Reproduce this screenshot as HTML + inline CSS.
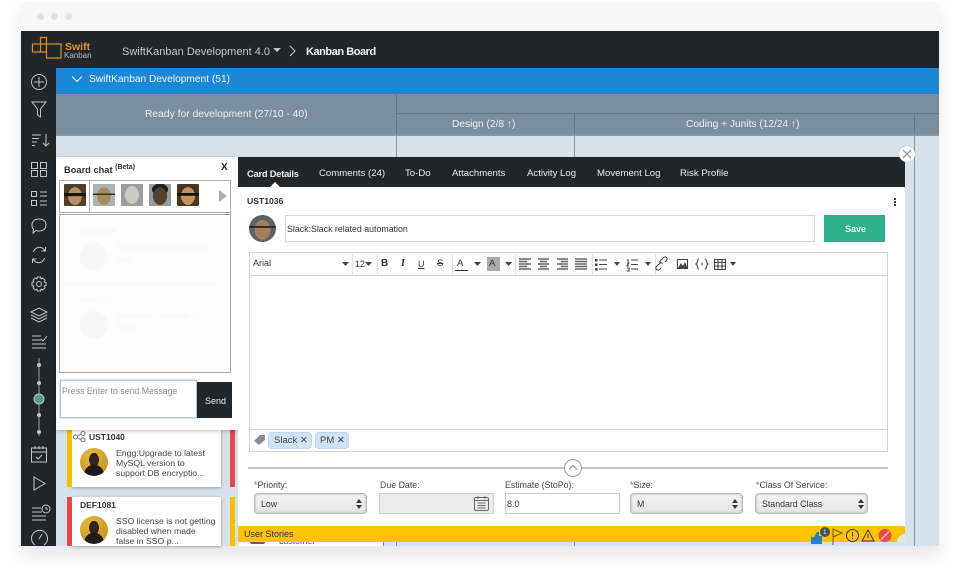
<!DOCTYPE html>
<html><head><meta charset="utf-8">
<style>
html,body{margin:0;padding:0;background:#fff;}
#p{position:relative;width:960px;height:574px;overflow:hidden;background:#fff;font-family:"Liberation Sans",sans-serif;color:#333;filter:blur(.3px);}
#p div,#p svg{position:absolute;}
.t{white-space:nowrap;font-size:10px;line-height:12px;}
.lab{font-size:8.8px;color:#444;white-space:nowrap;line-height:11px;}
.sel{background:linear-gradient(#f5f5f5,#e4e4e4);border:1px solid #bbb;border-radius:4px;box-shadow:inset 0 0 2px #aaa;box-sizing:border-box;height:21px;top:493px;font-size:8.8px;line-height:20px;padding-left:6px;color:#333;}
.i{fill:none;stroke:#bfc4c8;stroke-width:1;}
.tb{font-size:10px;line-height:12px;color:#333;white-space:nowrap;}
.sep{background:#e2e2e2;width:1px;top:254px;height:21px;}
.tab{color:#e9ecee;font-size:9.6px;line-height:12px;white-space:nowrap;top:168px;}
.av{border-radius:1px;width:22px;height:22px;top:184px;}
.gold{background:radial-gradient(ellipse 10px 10px at 50% 95%,#1d1a18 98%,transparent),radial-gradient(ellipse 5px 7px at 50% 42%,#32241a 98%,transparent),radial-gradient(circle at 40% 30%,#e8bb3c,#b98a20);}
</style></head><body><div id="p">

<!-- window shadow -->
<div style="left:21px;top:2px;width:918px;height:544px;box-shadow:0 9px 16px rgba(0,0,0,.1);border-radius:4px 4px 0 0;"></div>
<!-- chrome -->
<div style="left:21px;top:2px;width:918px;height:29px;background:#f8f8f8;border-radius:4px 4px 0 0;"></div>
<div style="left:37px;top:13px;width:7px;height:7px;border-radius:50%;background:#e3e3e3;"></div>
<div style="left:51px;top:13px;width:7px;height:7px;border-radius:50%;background:#e3e3e3;"></div>
<div style="left:65px;top:13px;width:7px;height:7px;border-radius:50%;background:#e3e3e3;"></div>

<!-- header -->
<div style="left:21px;top:31px;width:918px;height:37px;background:#20262c;"></div>
<svg style="left:30px;top:35px;" width="34" height="26" fill="none" stroke="#e08a1e" stroke-width="1.2"><path d="M2.500 9h8v8h-8zM10.500 9V2.500h6V9h-6M16.500 9H31v14H16.500V9M10.500 17h6"/></svg>
<div class="t" style="left:65px;top:41px;font-size:10.500px;font-weight:bold;color:#e8941f;">Swift</div>
<div class="t" style="left:64px;top:50px;font-size:8px;color:#b8bcbf;">Kanban</div>
<div class="t" style="left:122px;top:46px;font-size:11px;line-height:13px;color:#c3c8cc;">SwiftKanban Development 4.0</div>
<div style="left:273px;top:48px;width:0;height:0;border-left:4px solid transparent;border-right:4px solid transparent;border-top:4px solid #c3c8cc;"></div>
<svg style="left:288px;top:45px;" width="10" height="12" fill="none" stroke="#c3c8cc"><path d="M2 1l5 5-5 5"/></svg>
<div class="t" style="left:306px;top:46px;font-size:11px;line-height:13px;font-weight:bold;letter-spacing:-.45px;color:#f2f4f5;">Kanban Board</div>

<!-- sidebar -->
<div style="left:21px;top:68px;width:35px;height:478px;background:#20262c;"></div>
<svg style="left:21px;top:68px;" width="35" height="478" class="i">
<g class="i">
<circle cx="18" cy="14" r="7.5"/><path d="M18 9v10M13 14h10"/>
<path d="M11 34h14l-5.500 7v8l-3-2v-6z"/>
<path d="M11 67h9M11 70.500h7M11 74h5M11 77.500h3M25 66v12M22 75l3 3 3-3"/>
<path d="M10.500 94.500h6v6h-6zM19.500 94.500h6v6h-6zM10.500 102.500h6v6h-6zM19.500 102.500h6v6h-6z"/>
<path d="M10.500 123.500h5v5h-5zM10.500 132.500h5v5h-5zM19 124h7M19 128h7M19 133h7M19 137h7"/>
<path d="M11 157c0-4 3-6 7-6s7 2 7 6-3 6-7 6c-1 0-2 0-3-.5l-3 2.500 .5-3.500c-1-1-1.500-3-1.500-4.500z"/>
<path d="M12.500 184a6 6 0 0 1 10-3l2 2M23.500 190a6 6 0 0 1-10 3l-2-2M24.500 179v4h-4M11.500 195v-4h4"/>
<circle cx="18" cy="216" r="2.500"/><path d="M16.500 209h3l.5 1.800 1.800-.8 2.200 2.200-.8 1.800 1.800.5v3l-1.800.5.8 1.800-2.200 2.200-1.800-.8-.5 1.800h-3l-.5-1.800-1.800.8-2.200-2.200.8-1.800-1.800-.5v-3l1.800-.5-.8-1.800 2.200-2.200 1.800.8z"/>
<path d="M10 244l8-4 8 4-8 4zM10 247l8 4 8-4M10 250l8 4 8-4"/>
<path d="M11 268h9M11 272h9M11 276h14M11 280h14M20 271l2 2 4-5"/>
<path d="M18 290v78" stroke="#9aa0a5"/>
<path d="M10.500 380h15v14h-15zM10.500 384h15M14 378v3M18 378v3M22 378v3M15 389l2 2 4-4"/>
<path d="M13 409l11 6.500-11 6.500z"/>
<path d="M11 440h9M11 444h10M11 448h14M11 452h14"/><circle cx="25" cy="441" r="4"/><path d="M25 439v2h2"/>
<path d="M14 477a8 8 0 1 1 9 0M18 471l3-5"/>
</g>
<circle cx="18" cy="297" r="2" fill="#bfc4c8" stroke="none"/>
<circle cx="18" cy="315" r="2" fill="#bfc4c8" stroke="none"/>
<circle cx="18" cy="331" r="5" fill="#4f9d94" stroke="#bfc4c8"/>
<circle cx="18" cy="347" r="2" fill="#bfc4c8" stroke="none"/>
<circle cx="18" cy="364" r="2" fill="#bfc4c8" stroke="none"/>
</svg>

<!-- blue band -->
<div style="left:56px;top:68px;width:883px;height:26px;background:#1b87d5;"></div>
<svg style="left:71px;top:74px;" width="12" height="10" fill="none" stroke="#e8f2fa"><path d="M1 2.500l5 5 5-5"/></svg>
<div class="t" style="left:89px;top:74px;font-size:10.200px;color:#f0f6fb;">SwiftKanban Development (51)</div>

<!-- column headers -->
<div style="left:56px;top:94px;width:883px;height:41px;background:#7a8e9f;"></div>
<div style="left:396px;top:113px;width:543px;height:1px;background:#64778a;"></div>
<div style="left:396px;top:94px;width:1px;height:41px;background:#64778a;"></div>
<div style="left:574px;top:114px;width:1px;height:21px;background:#64778a;"></div>
<div style="left:914px;top:114px;width:1px;height:21px;background:#64778a;"></div>
<div class="t" style="left:145px;top:109px;font-size:10.300px;color:#eef1f3;">Ready for development (27/10 - 40)</div>
<div class="t" style="left:452px;top:119px;font-size:10.200px;color:#eef1f3;">Design (2/8 ↑)</div>
<div class="t" style="left:686px;top:119px;font-size:10.200px;color:#eef1f3;">Coding + Junits (12/24 ↑)</div>

<!-- board -->
<div style="left:56px;top:135px;width:883px;height:411px;background:#d6e1ea;"></div>
<div style="left:56px;top:134px;width:883px;height:2px;background:#8396a6;"></div>
<div style="left:396px;top:135px;width:1px;height:411px;background:#8898a6;"></div>
<div style="left:574px;top:135px;width:1px;height:411px;background:#8898a6;"></div>
<div style="left:914px;top:135px;width:1px;height:411px;background:#8898a6;"></div>

<!-- cards under chat -->
<div style="left:72px;top:425px;width:149px;height:62px;background:#fff;box-shadow:0 1px 3px rgba(0,0,0,.3);"></div>
<div style="left:67px;top:425px;width:5px;height:62px;background:#f5c000;"></div>
<div style="left:230px;top:425px;width:5px;height:62px;background:#e5484d;"></div>
<svg style="left:73px;top:431px;" width="13" height="11" fill="none" stroke="#777"><circle cx="2.500" cy="6" r="2"/><circle cx="10" cy="2.500" r="2"/><circle cx="10" cy="9" r="2"/><path d="M4.500 5l3.500-2M4.500 7l3.500 1.500"/></svg>
<div class="t" style="left:89px;top:431px;font-size:8.500px;font-weight:bold;color:#333;">UST1040</div>
<div class="gold" style="left:80px;top:448px;width:28px;height:28px;border-radius:50%;"></div>
<div class="t" style="left:116px;top:447px;font-size:8.700px;line-height:10.300px;color:#444;padding-top:.5px;">Engg:Upgrade to latest<br>MySQL version to<br>support DB encryptio...</div>

<div style="left:72px;top:497px;width:149px;height:49px;background:#fff;box-shadow:0 1px 3px rgba(0,0,0,.3);"></div>
<div style="left:67px;top:497px;width:5px;height:49px;background:#e5484d;"></div>
<div style="left:230px;top:497px;width:5px;height:49px;background:#f5c000;"></div>
<div class="t" style="left:80px;top:499px;font-size:8.500px;font-weight:bold;color:#333;">DEF1081</div>
<div class="gold" style="left:80px;top:516px;width:28px;height:28px;border-radius:50%;"></div>
<div class="t" style="left:116px;top:515px;font-size:8.700px;line-height:10.300px;color:#444;padding-top:.5px;">SSO license is not getting<br>disabled when made<br>false in SSO p...</div>

<!-- chat panel -->
<div style="left:56px;top:157px;width:182px;height:273px;background:#fff;box-shadow:0 1px 4px rgba(0,0,0,.25);"></div>
<div class="t" style="left:64px;top:164px;font-size:9.300px;font-weight:bold;color:#333;">Board chat <sup style="font-size:7px;line-height:0;">(Beta)</sup></div>
<div class="t" style="left:221px;top:162px;font-size:10px;font-weight:bold;color:#222;">X</div>
<div style="left:59px;top:180px;width:172px;height:33px;border:1px solid #aaa;box-sizing:border-box;"></div>
<div style="left:89px;top:180px;width:1px;height:33px;background:#aaa;"></div>
<div class="av" style="left:64px;background:linear-gradient(transparent 40%,#141414 41%,#141414 55%,transparent 56%),radial-gradient(ellipse 7px 9px at 50% 55%,#b98d66 98%,transparent),#4f3f2c;"></div>
<div class="av" style="left:93px;background:linear-gradient(transparent 42%,#3a3020 43%,#3a3020 50%,transparent 51%),radial-gradient(ellipse 7px 9px at 50% 55%,#a98a60 98%,transparent),#a9b4b4;"></div>
<div class="av" style="left:121px;background:radial-gradient(ellipse 7px 9px at 50% 50%,#cfc9bf 98%,transparent),#9c9c9c;"></div>
<div class="av" style="left:149px;background:radial-gradient(ellipse 7px 9px at 50% 55%,#53402f 98%,transparent),radial-gradient(ellipse 8px 6px at 50% 25%,#1c1c1c 98%,transparent),#969c9c;"></div>
<div class="av" style="left:177px;background:linear-gradient(transparent 40%,#111 41%,#111 53%,transparent 54%),radial-gradient(ellipse 7px 9px at 50% 55%,#c6935f 98%,transparent),#4a3620;"></div>
<div style="left:219px;top:190px;width:0;height:0;border-top:6px solid transparent;border-bottom:6px solid transparent;border-left:8px solid #a8adb1;"></div>
<div style="left:59px;top:214px;width:172px;height:159px;border:1px solid #a5a5a5;box-sizing:border-box;background:#fdfdfd;"></div>
<div class="t" style="left:80px;top:226px;font-size:8.500px;color:#f7f7f7;">UST1078</div>
<div style="left:80px;top:243px;width:28px;height:28px;border-radius:50%;background:#f8f8f8;"></div>
<div class="t" style="left:116px;top:243px;font-size:8.800px;line-height:11px;color:#f7f7f7;">SSO for Android Mobile<br>App</div>
<div style="left:65px;top:284px;width:155px;height:1px;background:#f8f8f8;"></div>
<div class="t" style="left:80px;top:294px;font-size:8.500px;color:#f7f7f7;">RK6874</div>
<div style="left:80px;top:311px;width:28px;height:28px;border-radius:50%;background:#f8f8f8;"></div>
<div class="t" style="left:116px;top:311px;font-size:8.800px;line-height:11px;color:#f7f7f7;">Rust/slow collapse UI<br>board</div>
<div style="left:60px;top:380px;width:137px;height:38px;border:1px solid #a9c7e3;box-sizing:border-box;background:#fff;box-shadow:0 0 2px #8cb8de;"></div>
<div class="t" style="left:62px;top:385px;font-size:8.800px;color:#8c8c8c;">Press Enter to send Message</div>
<div style="left:197px;top:382px;width:35px;height:36px;background:#20262c;"></div>
<div class="t" style="left:205px;top:395px;font-size:9px;color:#eee;">Send</div>

<!-- modal -->
<div style="left:238px;top:157px;width:667px;height:369px;background:#fff;"></div>
<div style="left:238px;top:157px;width:667px;height:30px;background:#20262c;"></div>
<div style="left:270px;top:182px;width:0;height:0;border-left:5px solid transparent;border-right:5px solid transparent;border-bottom:5px solid #fff;"></div>
<div class="tab" style="left:247px;top:168px;font-weight:bold;font-size:9.400px;letter-spacing:-.25px;">Card Details</div>
<div class="tab" style="left:319px;">Comments (24)</div>
<div class="tab" style="left:405px;">To-Do</div>
<div class="tab" style="left:452px;">Attachments</div>
<div class="tab" style="left:527px;">Activity Log</div>
<div class="tab" style="left:597px;">Movement Log</div>
<div class="tab" style="left:680px;">Risk Profile</div>
<div style="left:899px;top:146px;width:16px;height:16px;border-radius:50%;background:#fff;box-shadow:0 0 1px #888;"></div>
<svg style="left:899px;top:146px;" width="16" height="16" stroke="#999" stroke-width="1.300"><path d="M4 4l8 8M12 4l-8 8"/></svg>

<div class="t" style="left:247px;top:195px;font-size:8.600px;font-weight:bold;color:#333;">UST1036</div>
<div style="left:894px;top:198px;width:2px;height:2px;background:#444;box-shadow:0 3px 0 #444,0 6px 0 #444;"></div>
<div style="left:249px;top:215px;width:27px;height:27px;border-radius:50%;background:linear-gradient(transparent 40%,#2a2a2a 41%,#2a2a2a 47%,transparent 48%),radial-gradient(ellipse 8px 10px at 50% 55%,#a87d5a 98%,transparent),#59636a;"></div>
<div style="left:285px;top:215px;width:530px;height:27px;border:1px solid #d5d5d5;box-sizing:border-box;"></div>
<div class="t" style="left:287px;top:223px;font-size:8.800px;color:#333;">Slack:Slack related automation</div>
<div style="left:824px;top:215px;width:61px;height:27px;background:#2fb08d;"></div>
<div class="t" style="left:845px;top:223px;font-size:9px;font-weight:bold;color:#eef9f5;">Save</div>

<!-- editor -->
<div style="left:249px;top:252px;width:639px;height:200px;border:1px solid #d5d5d5;box-sizing:border-box;"></div>
<div style="left:249px;top:275px;width:639px;height:1px;background:#d5d5d5;"></div>
<div style="left:249px;top:429px;width:639px;height:1px;background:#d5d5d5;"></div>
<div class="sep" style="left:352px;"></div><div class="sep" style="left:377px;"></div><div class="sep" style="left:452px;"></div><div class="sep" style="left:515px;"></div><div class="sep" style="left:592px;"></div><div class="sep" style="left:655px;"></div>
<div class="tb" style="left:253px;top:257px;font-size:9px;">Arial</div>
<div class="tb" style="left:355px;top:258px;font-size:9px;">12</div>
<div class="tb" style="left:381px;top:258px;font-weight:bold;">B</div>
<div class="tb" style="left:401px;top:258px;font-family:'Liberation Serif',serif;font-style:italic;font-weight:bold;">I</div>
<div class="tb" style="left:418px;top:258px;text-decoration:underline;font-size:9px;">U</div>
<div class="tb" style="left:437px;top:258px;text-decoration:line-through;font-size:9.500px;">S</div>
<div class="tb" style="left:457px;top:258px;font-size:9.500px;">A</div>
<div style="left:455px;top:270px;width:13px;height:1px;background:#333;"></div>
<div style="left:487px;top:257px;width:13px;height:14px;background:#aaa;"></div>
<div class="tb" style="left:489px;top:258px;font-size:9.500px;">A</div>
<svg style="left:341px;top:254px;" width="400" height="20" fill="#444">
<path d="M1 8h7l-3.500 4zM24 8h7l-3.500 4zM133 8h7l-3.500 4zM164 8h7l-3.500 4zM273 8h6l-3 4zM304 8h6l-3 4zM389 8h6l-3 4z"/>
<g fill="none" stroke="#666" stroke-width="1.500">
<path d="M178 5h12M178 7.500h8M178 10h12M178 12.500h8M178 15h12"/>
<path d="M197 5h11M199 7.500h7M197 10h11M199 12.500h7M197 15h11"/>
<path d="M216 5h11M220 7.500h7M216 10h11M220 12.500h7M216 15h11"/>
<path d="M234 5h12M234 7.500h12M234 10h12M234 12.500h12M234 15h12"/>
</g>
<g fill="none" stroke="#444" stroke-width="1.100">
<path d="M258 6h8M258 10.500h8M258 15h8M290 6h7M290 10.500h7M290 15h7"/>
<path d="M287 5v3M286 9h2l-2 3h2M286 14h2v3h-2"/>
<path d="M320 14l-1.500 1.500a2 2 0 0 1-3-3l3-3a2 2 0 0 1 3 0M324 8l1.500-1.500a2 2 0 0 0-3-3l-3 3a2 2 0 0 0 0 3"/>
<path d="M336.500 5.500h10v9h-10z"/>
<path d="M358 5c-2 0-1 4-3 5 2 1 1 5 3 5M364 5c2 0 1 4 3 5-2 1-1 5-3 5M361 8.500v3"/>
<path d="M373.500 5.500h11v10h-11zM373.500 8.500h11M373.500 12h11M377 5.500v10M381 5.500v10"/>
</g>
<path d="M254 5h2.500v2.500H254zM254 9.500h2.500v2.500H254zM254 14h2.500v2.500H254zM337 14l3-5 2 3 2-4 2.500 6z"/>
</svg>

<!-- tags -->
<svg style="left:253px;top:434px;" width="13" height="12"><path d="M1 7l6-6h5v5l-6 5z" fill="#8a8d90"/></svg>
<div style="left:268px;top:432px;width:44px;height:17px;background:#d0e3f5;border:1px solid #bcd6ee;border-radius:4px;box-sizing:border-box;"></div>
<div class="t" style="left:274px;top:435px;font-size:9.500px;color:#444;">Slack ✕</div>
<div style="left:315px;top:432px;width:34px;height:17px;background:#d0e3f5;border:1px solid #bcd6ee;border-radius:4px;box-sizing:border-box;"></div>
<div class="t" style="left:320px;top:435px;font-size:9.500px;color:#444;">PM ✕</div>

<!-- splitter -->
<div style="left:248px;top:467px;width:640px;height:2px;background:#c4c4c4;"></div>
<div style="left:564px;top:459px;width:18px;height:18px;border:1px solid #999;border-radius:50%;background:#fff;box-sizing:border-box;"></div>
<svg style="left:564px;top:459px;" width="18" height="18" fill="none" stroke="#888"><path d="M5 10.500l4-4 4 4"/></svg>

<!-- form -->
<div class="lab" style="left:254px;top:480px;"><span style="color:#e33;">*</span>Priority:</div>
<div class="lab" style="left:380px;top:480px;">Due Date:</div>
<div class="lab" style="left:505px;top:480px;">Estimate (StoPo):</div>
<div class="lab" style="left:630px;top:480px;"><span style="color:#e33;">*</span>Size:</div>
<div class="lab" style="left:756px;top:480px;"><span style="color:#e33;">*</span>Class Of Service:</div>
<div class="sel" style="left:254px;width:113px;">Low</div>
<div class="sel" style="left:630px;width:113px;">M</div>
<div class="sel" style="left:755px;width:113px;">Standard Class</div>
<svg style="left:356px;top:499px;" width="6" height="10" fill="#333"><path d="M0 4l3-4 3 4zM0 6l3 4 3-4z"/></svg>
<svg style="left:732px;top:499px;" width="6" height="10" fill="#333"><path d="M0 4l3-4 3 4zM0 6l3 4 3-4z"/></svg>
<svg style="left:858px;top:499px;" width="6" height="10" fill="#333"><path d="M0 4l3-4 3 4zM0 6l3 4 3-4z"/></svg>
<div style="left:379px;top:493px;width:115px;height:21px;background:#ececec;border:1px solid #ccc;box-sizing:border-box;"></div>
<svg style="left:473px;top:495px;" width="17" height="17" fill="none" stroke="#666"><rect x="1.500" y="2.500" width="14" height="13" rx="1.500"/><path d="M1.500 5.500h14M5 1v3M12 1v3M4.500 8h8M4.500 10.500h8M4.500 13h8"/></svg>
<div style="left:505px;top:493px;width:115px;height:21px;background:#fff;border:1px solid #ccc;box-sizing:border-box;"></div>
<div class="t" style="left:507px;top:498px;font-size:9px;">8.0</div>

<!-- peek of card below the yellow bar -->
<div style="left:238px;top:526px;width:145px;height:20px;background:#fbfbfb;"></div>
<div style="left:383px;top:526px;width:1px;height:20px;background:#8898a6;"></div>
<div class="t" style="left:279px;top:535px;font-size:8.800px;color:#555;">customer</div>
<div style="left:250px;top:542px;width:15px;height:2px;background:#7a6030;border-radius:0 0 8px 8px;"></div>

<!-- yellow bar -->
<div style="left:238px;top:526px;width:667px;height:16px;background:#fdc300;"></div>
<div class="t" style="left:244px;top:528px;font-size:9px;color:#333;">User Stories</div>
<svg style="left:810px;top:526px;" width="95" height="20" fill="none">
<path d="M1 18v-7h3l3-5h2v4h3v8z" fill="#2a7fc4"/>
<circle cx="15" cy="6" r="5" fill="#4a4f55"/>
<path d="M23 19V3l9 4-9 4" stroke="#6e5a1a"/>
<circle cx="42.500" cy="9.500" r="6" stroke="#3a3a2a"/><path d="M42.500 6v4.500M42.500 12v1" stroke="#3a3a2a"/>
<path d="M58 4l6 11H52z" stroke="#3a3a2a"/><path d="M58 8v4" stroke="#3a3a2a"/>
<circle cx="75" cy="9.500" r="6.500" fill="#e5484d"/><path d="M71 13.500l8-8" stroke="#f6c9a0" stroke-width="1.500"/>
</svg>
<div class="t" style="left:823px;top:527px;font-size:6.500px;color:#eee;">1</div>
<div style="left:897px;top:534px;width:8px;height:8px;background:#e5e5e5;border-radius:8px 0 0 0;"></div>
</div></body></html>
